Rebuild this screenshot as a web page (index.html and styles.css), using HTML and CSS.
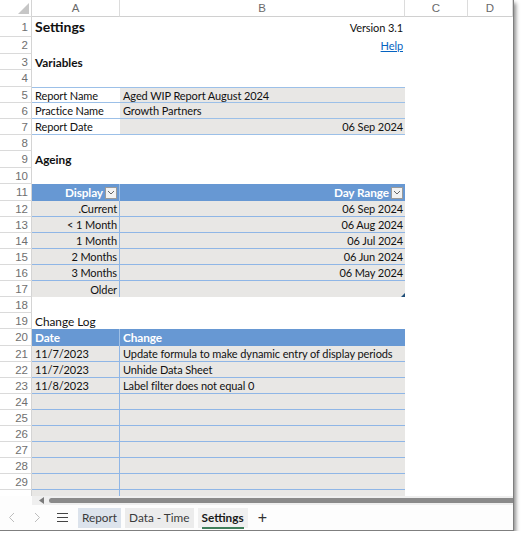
FILE: index.html
```html
<!DOCTYPE html>
<html>
<head>
<meta charset="utf-8">
<link rel="stylesheet" href="styles.css">
</head>
<body>
<div class="window">
  <div class="grid">
    <div class="row hdr">
      <div class="rh corner"><svg width="11" height="11" viewBox="0 0 11 11"><polygon points="11,0 11,11 0,11" fill="#c6c6c6"/></svg></div>
      <div class="ch">A</div><div class="ch">B</div><div class="ch">C</div><div class="ch">D</div>
    </div>
    <div class="row h20"><div class="rh">1</div><div class="c title">Settings</div><div class="c r">Version 3.1</div><div class="c"></div><div class="c"></div></div>
    <div class="row h17"><div class="rh">2</div><div class="c"></div><div class="c r"><span class="link">Help</span></div><div class="c"></div><div class="c"></div></div>
    <div class="row h16"><div class="rh">3</div><div class="c sect">Variables</div><div class="c"></div><div class="c"></div><div class="c"></div></div>
    <div class="row h17"><div class="rh">4</div><div class="c"></div><div class="c"></div><div class="c"></div><div class="c"></div></div>
    <div class="row h16"><div class="rh">5</div><div class="c var first">Report Name</div><div class="c var val first">Aged WIP Report August 2024</div><div class="c"></div><div class="c"></div></div>
    <div class="row h16"><div class="rh">6</div><div class="c var">Practice Name</div><div class="c var val">Growth Partners</div><div class="c"></div><div class="c"></div></div>
    <div class="row h16"><div class="rh">7</div><div class="c var">Report Date</div><div class="c var val r">06 Sep 2024</div><div class="c"></div><div class="c"></div></div>
    <div class="row h16"><div class="rh">8</div><div class="c"></div><div class="c"></div><div class="c"></div><div class="c"></div></div>
    <div class="row h17"><div class="rh">9</div><div class="c sect">Ageing</div><div class="c"></div><div class="c"></div><div class="c"></div></div>
    <div class="row h16"><div class="rh">10</div><div class="c"></div><div class="c"></div><div class="c"></div><div class="c"></div></div>
    <div class="row h17"><div class="rh">11</div>
      <div class="c th ta r">Display<span class="dd"><svg width="8" height="5" viewBox="0 0 8 5"><polyline points="1,1 4,4 7,1" fill="none" stroke="#666" stroke-width="1"/></svg></span></div>
      <div class="c th r">Day Range<span class="dd"><svg width="8" height="5" viewBox="0 0 8 5"><polyline points="1,1 4,4 7,1" fill="none" stroke="#666" stroke-width="1"/></svg></span></div>
      <div class="c"></div><div class="c"></div></div>
    <div class="row h16"><div class="rh">12</div><div class="c td ta r">.Current</div><div class="c td r">06 Sep 2024</div><div class="c"></div><div class="c"></div></div>
    <div class="row h16"><div class="rh">13</div><div class="c td ta r">&lt; 1 Month</div><div class="c td r">06 Aug 2024</div><div class="c"></div><div class="c"></div></div>
    <div class="row h16"><div class="rh">14</div><div class="c td ta r">1 Month</div><div class="c td r">06 Jul 2024</div><div class="c"></div><div class="c"></div></div>
    <div class="row h16"><div class="rh">15</div><div class="c td ta r">2 Months</div><div class="c td r">06 Jun 2024</div><div class="c"></div><div class="c"></div></div>
    <div class="row h16"><div class="rh">16</div><div class="c td ta r">3 Months</div><div class="c td r">06 May 2024</div><div class="c"></div><div class="c"></div></div>
    <div class="row h16"><div class="rh">17</div><div class="c td ta r last">Older</div><div class="c td r last handle"></div><div class="c"></div><div class="c"></div></div>
    <div class="row h16"><div class="rh">18</div><div class="c"></div><div class="c"></div><div class="c"></div><div class="c"></div></div>
    <div class="row h16"><div class="rh">19</div><div class="c log">Change Log</div><div class="c"></div><div class="c"></div><div class="c"></div></div>
    <div class="row h17"><div class="rh">20</div><div class="c th ta">Date</div><div class="c th">Change</div><div class="c"></div><div class="c"></div></div>
    <div class="row h16"><div class="rh">21</div><div class="c td ta">11/7/2023</div><div class="c td">Update formula to make dynamic entry of display periods</div><div class="c"></div><div class="c"></div></div>
    <div class="row h16"><div class="rh">22</div><div class="c td ta">11/7/2023</div><div class="c td">Unhide Data Sheet</div><div class="c"></div><div class="c"></div></div>
    <div class="row h16"><div class="rh">23</div><div class="c td ta">11/8/2023</div><div class="c td">Label filter does not equal 0</div><div class="c"></div><div class="c"></div></div>
    <div class="row h16"><div class="rh">24</div><div class="c td ta"></div><div class="c td"></div><div class="c"></div><div class="c"></div></div>
    <div class="row h16"><div class="rh">25</div><div class="c td ta"></div><div class="c td"></div><div class="c"></div><div class="c"></div></div>
    <div class="row h16"><div class="rh">26</div><div class="c td ta"></div><div class="c td"></div><div class="c"></div><div class="c"></div></div>
    <div class="row h16"><div class="rh">27</div><div class="c td ta"></div><div class="c td"></div><div class="c"></div><div class="c"></div></div>
    <div class="row h16"><div class="rh">28</div><div class="c td ta"></div><div class="c td"></div><div class="c"></div><div class="c"></div></div>
    <div class="row h16"><div class="rh">29</div><div class="c td ta"></div><div class="c td"></div><div class="c"></div><div class="c"></div></div>
    <div class="row h6"><div class="rh cut"></div><div class="c td ta nb"></div><div class="c td nb"></div><div class="c"></div><div class="c"></div></div>
  </div>
  <div class="hscroll">
    <div class="hs-gap"></div>
    <div class="hs-arrow"><svg width="5" height="7" viewBox="0 0 5 7"><polygon points="5,0 5,7 0,3.5" fill="#7a7a7a"/></svg></div>
    <div class="hs-thumb"></div>
  </div>
  <div class="tabs">
    <span class="nav"><svg width="7" height="11" viewBox="0 0 7 11"><polyline points="6,1 1.5,5.5 6,10" fill="none" stroke="#bdbdbd" stroke-width="1"/></svg></span>
    <span class="nav"><svg width="7" height="11" viewBox="0 0 7 11"><polyline points="1,1 5.5,5.5 1,10" fill="none" stroke="#bdbdbd" stroke-width="1"/></svg></span>
    <span class="menu"><svg width="11" height="9" viewBox="0 0 11 9"><path d="M0 0.5H11M0 4.5H11M0 8.5H11" stroke="#444" stroke-width="1"/></svg></span>
    <span class="tab report">Report</span>
    <span class="tab data">Data - Time</span>
    <span class="tab active">Settings</span>
    <span class="plus">+</span>
  </div>
</div>
</body>
</html>
```
FILE: styles.css
```css
* { box-sizing: border-box; }
body {
  margin: 0;
  background: #ffffff;
  font-family: Lato, "Open Sans", sans-serif;
}
.window {
  width: 514px;
  height: 531px;
  background: #fdfdfd;
  border-right: 1px solid #7f7f7f;
  border-bottom: 1px solid #7f7f7f;
  box-shadow: 2px 3px 4px rgba(0,0,0,0.45);
  overflow: hidden;
  display: flex;
  flex-direction: column;
}
.grid { display: flex; flex-direction: column; }
.row {
  display: grid;
  grid-template-columns: 32px 88px 285px 63px 45px;
}
.hdr { height: 17px; }
.h20 { height: 20px; }
.h17 { height: 17px; }
.h16 { height: 16px; }
.h6 { height: 6px; overflow: hidden; }

.rh {
  border-right: 1px solid #d4d4d4;
  border-bottom: 1px solid #dadada;
  color: #6f6f6f;
  font-family: "Liberation Sans", Arial, sans-serif;
  font-size: 11.5px;
  display: flex;
  align-items: center;
  justify-content: flex-end;
  padding-right: 3px;
  background: #ffffff;
}
.rh.cut { border-bottom: 0; }
.corner { align-items: flex-end; padding: 0 2px 2px 0; }
.ch {
  border-right: 1px solid #dcdcdc;
  border-bottom: 1px solid #d0d0d0;
  color: #6a6a6a;
  font-family: "Liberation Sans", Arial, sans-serif;
  font-size: 11.5px;
  display: flex;
  align-items: center;
  justify-content: center;
  background: #ffffff;
}

.c {
  display: flex;
  align-items: center;
  padding: 0 3px;
  font-size: 11px;
  letter-spacing: -0.1px;
  color: #111111;
  white-space: nowrap;
  overflow: hidden;
  background: #ffffff;
}
.c.r { justify-content: flex-end; padding-right: 2px; }
.title { font-size: 14px; font-weight: bold; align-items: flex-end; padding-bottom: 2px; letter-spacing: 0; }
.sect { font-size: 11.8px; font-weight: bold; letter-spacing: 0; }
.log { font-size: 11.8px; letter-spacing: 0; }
.link { color: #0563c1; text-decoration: underline; }

.var { border-bottom: 1px solid #9cc0e8; }
.var.first { border-top: 1px solid #9cc0e8; }
.var.val { background: #e8e7e5; }

.th {
  background: #6798d3;
  color: #ffffff;
  font-weight: bold;
  font-size: 11.8px;
  letter-spacing: -0.1px;
}
.th.ta { border-right: 1px solid #9fc0e6; }
.dd {
  width: 12px;
  height: 12px;
  margin-left: 2px;
  background: #f2f2f2;
  border: 1px solid #9a9a9a;
  display: flex;
  align-items: center;
  justify-content: center;
}
.td {
  background: #e8e7e5;
  border-bottom: 1px solid #8fb6e6;
}
.td.ta { border-right: 1px solid #8fb6e6; }
.td.last { border-bottom: 0; }
.td.nb { border-bottom: 0; }
.handle { position: relative; overflow: visible; }
.handle::after {
  content: "";
  position: absolute;
  right: 0;
  bottom: 0;
  width: 4px;
  height: 4px;
  background: #1f4e79;
  clip-path: polygon(100% 0, 100% 100%, 0 100%);
}

.hscroll {
  height: 9px;
  display: flex;
  align-items: center;
  background: #efefef;
}
.hs-gap { width: 32px; height: 100%; background: #fdfdfd; }
.hs-arrow { width: 17px; display: flex; justify-content: center; padding-left: 2px; }
.hs-thumb {
  flex: 1;
  height: 5px;
  background: #8a8a8a;
  border-radius: 3px 0 0 3px;
}

.tabs {
  flex: 1;
  display: flex;
  align-items: center;
  background: #fdfdfd;
  color: #3a3a3a;
  padding-left: 8px;
}
.nav {
  width: 26px;
  display: flex;
  align-items: center;
}
.menu { width: 21px; display: flex; align-items: center; padding-left: 0; margin-left: -3px; }
.tab {
  height: 20px;
  display: flex;
  align-items: center;
  padding: 0 4px;
  margin-right: 4px;
  font-family: Lato, "Open Sans", sans-serif;
  font-size: 11.8px;
}
.report { background: #dce3ec; }
.data { background: #ececec; }
.active {
  background: #f0f0f0;
  font-weight: bold;
  color: #1a1a1a;
  position: relative;
}
.active::after {
  content: "";
  position: absolute;
  left: 4px;
  right: 4px;
  bottom: -1px;
  height: 2px;
  background: #3f7e5a;
}
.plus { margin-left: 6px; font-size: 16px; color: #333; font-family: "Liberation Sans", sans-serif; }
```
